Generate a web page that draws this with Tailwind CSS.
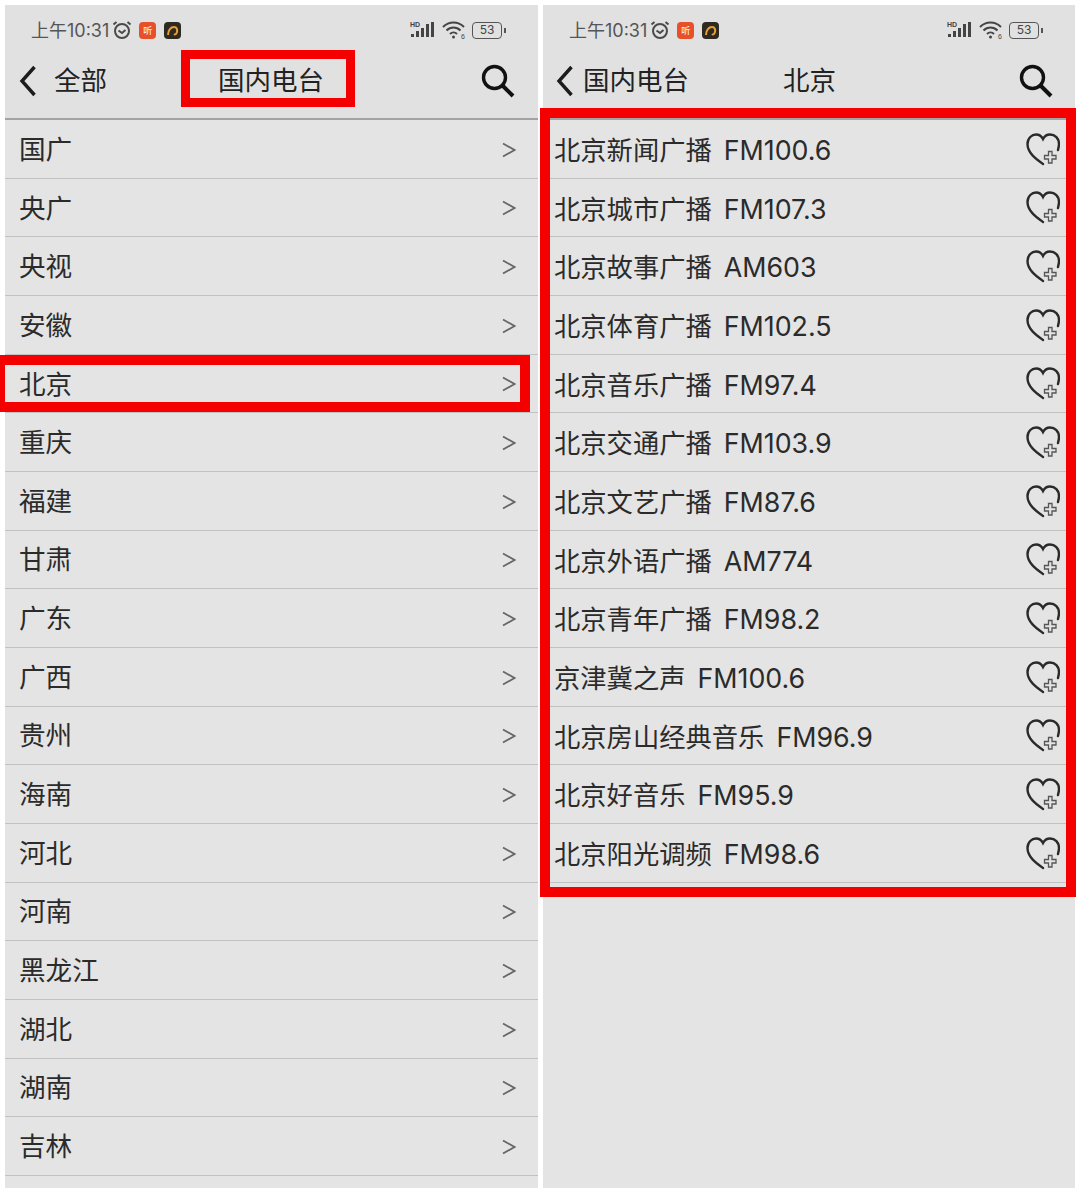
<!DOCTYPE html>
<html lang="zh">
<head>
  <meta charset="UTF-8" />
  <title>国内电台</title>
  <script src="https://cdn.jsdelivr.net/npm/@tailwindcss/browser@4"></script>
</head>
<body class="bg-white font-['Inter','Noto_Sans_CJK_SC',sans-serif]">

<div class="relative w-[1080px] h-[1193px] overflow-hidden">
  <div class="flex gap-[5px] pl-[5px] pt-[5px]">

    <!-- left panel -->
    <section class="w-[533px] h-[1183px] bg-[#e4e4e4]">
      <div class="status h-[50px] bg-[#e1e1e1] pl-[26px] pr-[32px]"></div>
      <header class="h-[65px] flex items-center bg-[#e1e1e1] border-b-2 border-[#a3a3a3] pb-[11px] pl-[14px] pr-[23px] text-[26.5px] text-[#222]">
        <svg class="w-[18px] h-[32px] mr-[17px]" viewBox="0 0 18 32" fill="none" stroke="#1c1c1c" stroke-width="3.4"><path d="M15.5 2 3 16l12.5 14"/></svg>
        <span class="w-[164px]">全部</span>
        <span>国内电台</span>
        <svg class="ml-auto w-[34px] h-[34px]" viewBox="0 0 34 34" fill="none" stroke="#111" stroke-width="3.4"><circle cx="13.5" cy="13.5" r="11"/><path d="m21.5 21.5 10.5 10.500" stroke-width="4"/></svg>
      </header>
      <ul id="provinces"></ul>
    </section>

    <!-- right panel -->
    <section class="w-[532px] h-[1183px] bg-[#e4e4e4]">
      <div class="status h-[50px] bg-[#e1e1e1] pl-[26px] pr-[32px]"></div>
      <header class="h-[65px] flex items-center bg-[#e1e1e1] border-b-2 border-[#a3a3a3] pb-[11px] pl-[13px] pr-[22px] text-[26.5px] text-[#222]">
        <svg class="w-[18px] h-[32px] mr-[9px]" viewBox="0 0 18 32" fill="none" stroke="#1c1c1c" stroke-width="3.4"><path d="M15.5 2 3 16l12.5 14"/></svg>
        <span class="w-[200px]">国内电台</span>
        <span>北京</span>
        <svg class="ml-auto w-[34px] h-[34px]" viewBox="0 0 34 34" fill="none" stroke="#111" stroke-width="3.4"><circle cx="13.5" cy="13.5" r="11"/><path d="m21.5 21.5 10.5 10.500" stroke-width="4"/></svg>
      </header>
      <ul id="stations"></ul>
    </section>
  </div>

  <!-- red annotation boxes -->
  <div class="absolute left-[181px] top-[50px] w-[174px] h-[57px] border-[9px] border-[#f40000]"></div>
  <div class="absolute left-[-5px] top-[355px] w-[535px] h-[57px] border-[10px] border-[#f40000]"></div>
  <div class="absolute left-[540px] top-[108px] w-[536px] h-[789px] border-[10px] border-[#f40000]"></div>
</div>

<script>
  const statusBar = `
    <div class="h-full flex items-center justify-between">
      <div class="flex items-center text-[#555]">
        <span class="text-[18px]">上午10:31</span>
        <svg class="ml-[3px] w-[20px] h-[20px]" viewBox="0 0 20 20" fill="none" stroke="#4a4a4a" stroke-width="2"><circle cx="10" cy="11" r="7"/><path d="M6.500 10.500 10 13l3.500-3M1.500 4.500 4.500 2M18.500 4.500 15.500 2"/></svg>
        <span class="ml-[7px] w-[17px] h-[17px] rounded-[4px] bg-[#e8502a] flex items-center justify-center text-[9px] leading-none text-white">听</span>
        <span class="ml-[8px] w-[17px] h-[17px] rounded-[4px] bg-[#2e2a22] flex items-center justify-center">
          <svg class="w-[13px] h-[13px]" viewBox="0 0 13 13" fill="none" stroke="#e8a030" stroke-width="2"><path d="M2 11C2 6 5 3 8 3s3.500 3 3 5-2 3-3 2"/></svg>
        </span>
      </div>
      <div class="flex items-center">
        <svg class="w-[26px] h-[20px]" viewBox="0 0 26 20" fill="#444"><text x="0" y="6.500" font-size="7" font-weight="700" font-family="Liberation Sans">HD</text><rect x="1" y="14" width="3" height="3"/><rect x="6" y="11" width="3" height="6"/><rect x="11" y="8" width="3" height="9"/><rect x="16" y="4" width="3" height="13"/><rect x="21" y="2" width="3" height="15"/></svg>
        <svg class="ml-[6px] w-[25px] h-[20px]" viewBox="0 0 25 20" fill="none" stroke="#444" stroke-width="2"><path d="M1 7c6-6 15-6 21 0M4.500 10.500c4-4 10-4 14 0M8 14c2-2 5-2 7 0"/><circle cx="11.500" cy="17" r="1.500" fill="#444" stroke="none"/><text x="19" y="19" font-size="7" fill="#444" stroke="none" font-family="Liberation Sans">6</text></svg>
        <span class="ml-[5px] w-[30px] h-[17px] border border-[#555] rounded-[4px] flex items-center justify-center text-[12px] leading-none text-[#444]">53</span>
        <span class="ml-[2px] w-[2px] h-[5px] bg-[#555]"></span>
      </div>
    </div>`;
  document.querySelectorAll('.status').forEach(el => el.innerHTML = statusBar);

  const provinces = ['国广','央广','央视','安徽','北京','重庆','福建','甘肃','广东','广西','贵州','海南','河北','河南','黑龙江','湖北','湖南','吉林'];
  document.getElementById('provinces').innerHTML = provinces.map(name => `
    <li class="h-[58.67px] flex items-center justify-between border-b border-[#c2c2c2] pl-[14px] pr-[22px] text-[26.6px] text-[#2b2b2b]">
      <span class="mt-[2px]">${name}</span>
      <svg class="mt-[2px] w-[14px] h-[16px]" viewBox="0 0 14 16" fill="none" stroke="#666" stroke-width="1.800"><path d="m1 1.500 11.500 6.500L1 14.500"/></svg>
    </li>`).join('');

  const heart = `
    <svg class="mt-[2px] w-[34px] h-[34px]" viewBox="0 0 34 34" fill="none">
      <path d="M17 31C10 26 1.500 20 1.500 11 1.500 5 6 1.500 10 1.500c3 0 5.500 1.500 7 4.500 1.500-3 4-4.500 7-4.500 5 0 9 4 9 9.500 0 2-.5 4-1 6" stroke="#2a2a2a" stroke-width="2.400" stroke-linecap="round"/>
      <path d="M22.500 18.500h3.500v4h4v3.500h-4v4h-3.500v-4h-4v-3.500h4z" stroke="#555" stroke-width="1.300"/>
    </svg>`;
  const stations = [['北京新闻广播','FM100.6'],['北京城市广播','FM107.3'],['北京故事广播','AM603'],['北京体育广播','FM102.5'],['北京音乐广播','FM97.4'],['北京交通广播','FM103.9'],['北京文艺广播','FM87.6'],['北京外语广播','AM774'],['北京青年广播','FM98.2'],['京津冀之声','FM100.6'],['北京房山经典音乐','FM96.9'],['北京好音乐','FM95.9'],['北京阳光调频','FM98.6']];
  document.getElementById('stations').innerHTML = stations.map(([name, freq]) => `
    <li class="h-[58.67px] flex items-center justify-between border-b border-[#c2c2c2] pl-[11px] pr-[15px] text-[26.3px] text-[#2b2b2b]">
      <span class="mt-[3px]">${name}<span class="ml-[12px] text-[26.8px]">${freq}</span></span>${heart}
    </li>`).join('');
</script>

</body>
</html>
